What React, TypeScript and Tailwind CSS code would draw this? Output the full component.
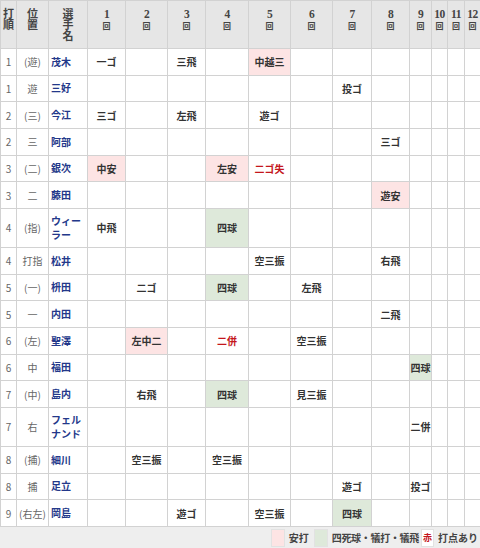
import React from "react";

type Cell = { t: string; k?: "hit" | "walk" | "red" };

interface Batter {
  order: string;
  pos: string;
  name: string[];
  innings: Record<number, Cell>;
}

const widths = [16, 32, 39, 38, 42, 38, 43, 42, 42, 39, 38, 22, 16, 17, 16];

const batters: Batter[] = [
  { order: "1", pos: "(遊)", name: ["茂木"], innings: { 1: { t: "一ゴ" }, 3: { t: "三飛" }, 5: { t: "中越三", k: "hit" } } },
  { order: "1", pos: "遊", name: ["三好"], innings: { 7: { t: "投ゴ" } } },
  { order: "2", pos: "(三)", name: ["今江"], innings: { 1: { t: "三ゴ" }, 3: { t: "左飛" }, 5: { t: "遊ゴ" } } },
  { order: "2", pos: "三", name: ["阿部"], innings: { 8: { t: "三ゴ" } } },
  { order: "3", pos: "(二)", name: ["銀次"], innings: { 1: { t: "中安", k: "hit" }, 4: { t: "左安", k: "hit" }, 5: { t: "二ゴ失", k: "red" } } },
  { order: "3", pos: "二", name: ["藤田"], innings: { 8: { t: "遊安", k: "hit" } } },
  { order: "4", pos: "(指)", name: ["ウィー", "ラー"], innings: { 1: { t: "中飛" }, 4: { t: "四球", k: "walk" } } },
  { order: "4", pos: "打指", name: ["松井"], innings: { 5: { t: "空三振" }, 8: { t: "右飛" } } },
  { order: "5", pos: "(一)", name: ["枡田"], innings: { 2: { t: "二ゴ" }, 4: { t: "四球", k: "walk" }, 6: { t: "左飛" } } },
  { order: "5", pos: "一", name: ["内田"], innings: { 8: { t: "二飛" } } },
  { order: "6", pos: "(左)", name: ["聖澤"], innings: { 2: { t: "左中二", k: "hit" }, 4: { t: "二併", k: "red" }, 6: { t: "空三振" } } },
  { order: "6", pos: "中", name: ["福田"], innings: { 9: { t: "四球", k: "walk" } } },
  { order: "7", pos: "(中)", name: ["島内"], innings: { 2: { t: "右飛" }, 4: { t: "四球", k: "walk" }, 6: { t: "見三振" } } },
  { order: "7", pos: "右", name: ["フェル", "ナンド"], innings: { 9: { t: "二併" } } },
  { order: "8", pos: "(捕)", name: ["細川"], innings: { 2: { t: "空三振" }, 4: { t: "空三振" } } },
  { order: "8", pos: "捕", name: ["足立"], innings: { 7: { t: "遊ゴ" }, 9: { t: "投ゴ" } } },
  { order: "9", pos: "(右左)", name: ["岡島"], innings: { 3: { t: "遊ゴ" }, 5: { t: "空三振" }, 7: { t: "四球", k: "walk" } } },
];

const innings = Array.from({ length: 12 }, (_, i) => i + 1);

const cellBg = (c?: Cell) =>
  c?.k === "hit" ? "bg-[#fde4e4]" : c?.k === "walk" ? "bg-[#dee9da]" : "bg-white";

const App: React.FC = () => {
  return (
    <div
      className="w-[480px] h-[548px] bg-[#eeeeee] text-[#333]"
      style={{ fontFamily: '"Noto Sans CJK JP", "Noto Sans", sans-serif' }}
    >
      <table className="table-fixed border-collapse w-[480px] text-[10px]">
        <colgroup>
          {widths.map((w, i) => (
            <col key={i} style={{ width: w }} />
          ))}
        </colgroup>
        <thead>
          <tr className="h-[48px] bg-[#e6e6e6]">
            {["打順", "位置", "選手名"].map((h, i) => (
              <th
                key={h}
                className={`border border-[#d2d2d2] align-top pt-[7px] px-0 font-bold text-[11px] leading-[11px] text-[#444] ${
                  i === 2 ? "px-[13px]" : i === 1 ? "px-[10px]" : ""
                }`}
              >
                {h}
              </th>
            ))}
            {innings.map((n) => (
              <th
                key={n}
                className="border border-[#d2d2d2] align-top pt-[7px] px-0 font-bold text-[#444]"
              >
                <div
                  className="text-[11.5px] leading-[12px] tracking-[-0.5px]"
                  style={{ fontFamily: '"Liberation Serif", serif' }}
                >
                  {n}
                </div>
                <div className="text-[8px] leading-[11px]">回</div>
              </th>
            ))}
          </tr>
        </thead>
        <tbody>
          {batters.map((b, r) => (
            <tr key={r} className={b.name.length > 1 ? "h-[39px]" : "h-[26.67px]"}>
              <td className="border border-[#d2d2d2] bg-white text-center text-[#666] p-0">{b.order}</td>
              <td className="border border-[#d2d2d2] bg-white text-center text-[#666] p-0 whitespace-nowrap">{b.pos}</td>
              <td className="border border-[#d2d2d2] bg-white pl-[2px] pr-0 font-bold text-[#23388a] leading-[14px]">
                {b.name.map((n) => (
                  <div key={n}>{n}</div>
                ))}
              </td>
              {innings.map((n) => {
                const c = b.innings[n];
                return (
                  <td
                    key={n}
                    className={`border border-[#d2d2d2] p-0 text-center font-bold whitespace-nowrap ${cellBg(c)} ${
                      c?.k === "red" ? "text-[#c4161c]" : "text-[#333]"
                    }`}
                  >
                    {c?.t}
                  </td>
                );
              })}
            </tr>
          ))}
        </tbody>
      </table>
      <div className="flex items-center justify-end h-[22px] pr-[2px] text-[10px] font-bold text-[#444]">
        <span className="w-[14px] h-[18px] bg-[#fde4e4] border border-[#e2e2e2]" />
        <span className="ml-[4px] mr-[5px]">安打</span>
        <span className="w-[14px] h-[18px] bg-[#dee9da] border border-[#e2e2e2]" />
        <span className="ml-[4px] mr-[2px] tracking-[-0.3px]">四死球・犠打・犠飛</span>
        <span className="w-[13px] h-[18px] bg-white border border-[#e2e2e2] text-[#c4161c] text-[9px] flex items-center justify-center">
          赤
        </span>
        <span className="ml-[4px]">打点あり</span>
      </div>
    </div>
  );
};

export default App;
